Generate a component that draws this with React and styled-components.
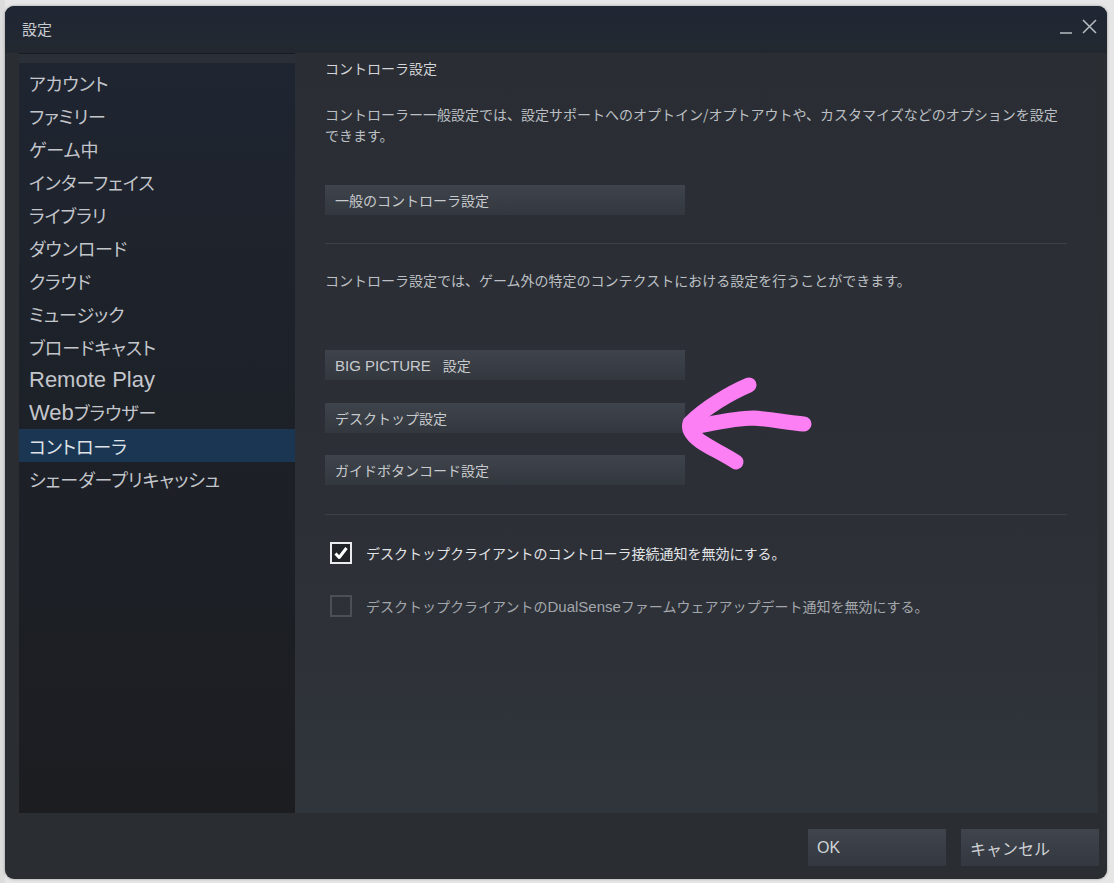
import React from "react";
import styled, { createGlobalStyle } from "styled-components";

const Global = createGlobalStyle`
  html, body { margin: 0; padding: 0; }
  body {
    background: #e4e4e4;
    font-family: "Liberation Sans", "Noto Sans CJK JP", sans-serif;
  }
`;

const Page = styled.div`
  width: 1114px;
  height: 883px;
  padding: 6px 7px 4px 5px;
  box-sizing: border-box;
  background: linear-gradient(90deg, #dcdcdc 0 5px, #e6e6e6 5px);
`;

const Window = styled.div`
  width: 1102px;
  height: 873px;
  border-radius: 9px;
  background: #2a2d32;
  box-shadow: 0 0 3px rgba(0, 0, 0, 0.35);
  display: flex;
  flex-direction: column;
  overflow: hidden;
`;

const TitleBar = styled.div`
  height: 47px;
  flex: none;
  display: flex;
  align-items: center;
  justify-content: space-between;
  padding: 0 10px 0 17px;
  background: linear-gradient(#1f2734, #232830);
  box-sizing: border-box;
`;

const Title = styled.div`
  color: #c9ccd1;
  font-size: 15px;
  font-family: "Noto Sans CJK JP", sans-serif;
  margin-top: -2px;
`;

const WinControls = styled.div`
  display: flex;
  align-items: center;
  gap: 9px;
  margin-top: -6px;
`;

const Main = styled.div`
  flex: 1;
  display: flex;
  padding: 0 9px 0 14px;
  min-height: 0;
`;

const Sidebar = styled.nav`
  width: 276px;
  flex: none;
  display: flex;
  flex-direction: column;
  background: linear-gradient(#1f2531 0%, #1d2128 45%, #1b1d21 100%);
`;

const SidebarTop = styled.div`
  height: 10px;
  background: #2b2f37;
  border-top: 1px solid #181b20;
  margin-bottom: 3px;
  box-sizing: border-box;
`;

const NavItem = styled.div`
  height: 33px;
  display: flex;
  align-items: center;
  padding-left: 10px;
  font-family: "Noto Sans CJK JP", sans-serif;
  font-feature-settings: "palt";
  font-size: 18px;
  color: ${(p) => (p.$active ? "#dfe3e8" : "#c3c6cb")};
  background: ${(p) => (p.$active ? "#1b3653" : "transparent")};
  white-space: nowrap;
`;

const Latin = styled.span`
  font-family: "Liberation Sans", sans-serif;
  font-size: ${(p) => p.$size || "22px"};
  margin-right: ${(p) => p.$gap || "0"};
`;

const Content = styled.section`
  flex: 1;
  position: relative;
  padding: 5px 31px 0 30px;
  background: linear-gradient(#2a2d33 0%, #2c2f36 60%, #30343b 100%);
  color: #c3c6ca;
  font-family: "Noto Sans CJK JP", sans-serif;
  font-size: 14px;
`;

const Heading = styled.div`
  color: #d3d5d8;
  font-size: 14px;
  line-height: 21px;
`;

const Paragraph = styled.p`
  margin: ${(p) => p.$mt || "0"} 0 0;
  line-height: 21px;
  font-size: 14px;
  white-space: nowrap;
  color: #bcc0c4;
`;

const ActionButton = styled.div`
  width: 360px;
  height: 30px;
  box-sizing: border-box;
  margin-top: ${(p) => p.$mt};
  padding-left: 10px;
  display: flex;
  align-items: center;
  background: linear-gradient(#3f434b, #33373e);
  color: #c8cbce;
  font-size: 14px;
  white-space: nowrap;
`;

const Divider = styled.hr`
  border: none;
  height: 1px;
  background: #3c4047;
  margin: ${(p) => p.$mt} 0 0;
`;

const CheckRow = styled.label`
  display: flex;
  align-items: center;
  gap: 14px;
  margin-top: ${(p) => p.$mt};
  padding-left: 5px;
  font-size: 14px;
  color: ${(p) => (p.$checked ? "#e2e4e6" : "#a3a7ac")};
  white-space: nowrap;
`;

const Box = styled.span`
  width: 22px;
  height: 22px;
  box-sizing: border-box;
  border: 2px solid ${(p) => (p.$checked ? "#e9ebee" : "#4c5056")};
  background: ${(p) => (p.$checked ? "#1f2226" : "transparent")};
  display: flex;
  align-items: center;
  justify-content: center;
`;

const Arrow = styled.svg`
  position: absolute;
  left: 375px;
  top: 320px;
  pointer-events: none;
`;

const Footer = styled.div`
  height: 66px;
  flex: none;
  display: flex;
  justify-content: flex-end;
  align-items: flex-start;
  gap: 15px;
  padding: 16px 8px 0 0;
  box-sizing: border-box;
`;

const FooterButton = styled.div`
  width: 138px;
  height: 37px;
  box-sizing: border-box;
  padding-left: 9px;
  display: flex;
  align-items: center;
  background: linear-gradient(#3f444d, #343840);
  color: #d0d3d6;
  font-size: 16px;
  font-family: "Liberation Sans", "Noto Sans CJK JP", sans-serif;
`;

const navItems = [
  "アカウント",
  "ファミリー",
  "ゲーム中",
  "インターフェイス",
  "ライブラリ",
  "ダウンロード",
  "クラウド",
  "ミュージック",
  "ブロードキャスト",
  "REMOTE",
  "WEB",
  "コントローラ",
  "シェーダープリキャッシュ",
];

function renderNav(label) {
  if (label === "REMOTE") return <Latin>Remote Play</Latin>;
  if (label === "WEB")
    return (
      <span>
        <Latin>Web</Latin>ブラウザー
      </span>
    );
  return label;
}

export default function App() {
  return (
    <>
      <Global />
      <Page>
        <Window>
          <TitleBar>
            <Title>設定</Title>
            <WinControls>
              <svg width="13" height="14" viewBox="0 0 13 14">
                <line x1="0" y1="13" x2="12" y2="13" stroke="#b9bdc3" strokeWidth="1.4" />
              </svg>
              <svg width="15" height="15" viewBox="0 0 15 15">
                <path d="M1 1 L14 14 M14 1 L1 14" stroke="#b9bdc3" strokeWidth="1.5" fill="none" />
              </svg>
            </WinControls>
          </TitleBar>
          <Main>
            <Sidebar>
              <SidebarTop />
              {navItems.map((n) => (
                <NavItem key={n} $active={n === "コントローラ"}>
                  {renderNav(n)}
                </NavItem>
              ))}
            </Sidebar>
            <Content>
              <Heading>コントローラ設定</Heading>
              <Paragraph $mt="25px">
                コントローラー一般設定では、設定サポートへのオプトイン/オプトアウトや、カスタマイズなどのオプションを設定
                <br />
                できます。
              </Paragraph>
              <ActionButton $mt="39px">一般のコントローラ設定</ActionButton>
              <Divider $mt="28px" />
              <Paragraph $mt="26px">
                コントローラ設定では、ゲーム外の特定のコンテクストにおける設定を行うことができます。
              </Paragraph>
              <ActionButton $mt="59px">
                <Latin $size="15px" $gap="12px">BIG PICTURE</Latin>設定
              </ActionButton>
              <ActionButton $mt="23px">デスクトップ設定</ActionButton>
              <ActionButton $mt="22px">ガイドボタンコード設定</ActionButton>
              <Divider $mt="29px" />
              <CheckRow $mt="27px" $checked>
                <Box $checked>
                  <svg width="14" height="14" viewBox="0 0 14 14">
                    <path
                      d="M1.5 7.5 L5.2 11.5 L12.5 2"
                      stroke="#ffffff"
                      strokeWidth="3"
                      fill="none"
                      strokeLinejoin="round"
                    />
                  </svg>
                </Box>
                <span>デスクトップクライアントのコントローラ接続通知を無効にする。</span>
              </CheckRow>
              <CheckRow $mt="31px">
                <Box />
                <span>
                  デスクトップクライアントの<Latin $size="15px">DualSense</Latin>
                  ファームウェアアップデート通知を無効にする。
                </span>
              </CheckRow>
              <Arrow width="150" height="100" viewBox="0 0 150 100">
                <g
                  stroke="#fd7ff4"
                  strokeWidth="15"
                  fill="none"
                  strokeLinecap="round"
                  strokeLinejoin="round"
                >
                  <path d="M79 12 C60 20 35 35 20 50 C18 56 22 62 30 68 C40 75 52 80 66 89" />
                  <path d="M24 54 C45 50 65 45 83 45 C102 46 118 50 134 51" />
                </g>
              </Arrow>
            </Content>
          </Main>
          <Footer>
            <FooterButton>OK</FooterButton>
            <FooterButton>キャンセル</FooterButton>
          </Footer>
        </Window>
      </Page>
    </>
  );
}
